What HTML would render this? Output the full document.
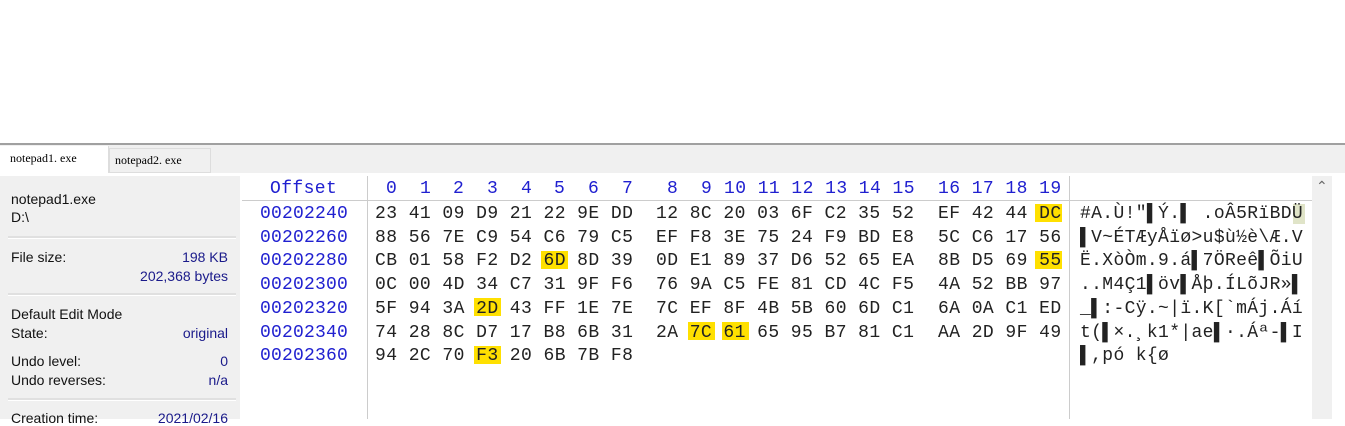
<!DOCTYPE html>
<html><head><meta charset="utf-8"><style>
body{margin:0;width:1345px;height:419px;overflow:hidden;background:#fff;position:relative;font-family:"Liberation Sans",Arial,sans-serif}
div,span{position:absolute}
.m{font-family:"Liberation Mono",monospace;font-size:18px;white-space:pre;color:#222}
.h{color:#2020d0}
.g{letter-spacing:0.43px}
.hl{background:#ffe000;height:18px;width:27px}
.lp{font-size:14px;color:#111}
.r{left:100px;width:128px;text-align:right;color:#1a1a8a}
.sep{left:8px;width:228px;height:2px;background:#e0e0e0;border-bottom:1px solid #fff}
</style></head><body>
<div style="left:0;top:143px;width:1345px;height:2px;background:#a0a0a0"></div>
<div style="left:0;top:145px;width:1345px;height:28px;background:#f0f0f0"></div>
<div style="left:0;top:146px;width:108px;height:27px;background:#fff;border-right:1px solid #ddd"></div>
<div style="left:109px;top:148px;width:100px;height:23px;background:#f0f0f0;border:1px solid #ddd"></div>
<div class="m" style="left:10px;top:151px;font-size:12px;font-family:'Liberation Serif',serif;color:#000">notepad1. exe</div>
<div class="m" style="left:115px;top:153px;font-size:12px;font-family:'Liberation Serif',serif;color:#000">notepad2. exe</div>
<div style="left:0;top:173px;width:1345px;height:3px;background:#fff"></div>
<div style="left:0;top:176px;width:240px;height:243px;background:#f0f0f0"></div>
<div style="left:240px;top:176px;width:2px;height:243px;background:#fff"></div>
<div class="lp" style="left:11px;top:191px">notepad1.exe</div>
<div class="lp" style="left:11px;top:209px">D:\</div>
<div class="sep" style="top:236px"></div>
<div class="lp" style="left:11px;top:249px">File size:</div>
<div class="lp r" style="top:249px">198 KB</div>
<div class="lp r" style="top:268px">202,368 bytes</div>
<div class="sep" style="top:293px"></div>
<div class="lp" style="left:11px;top:306px">Default Edit Mode</div>
<div class="lp" style="left:11px;top:325px">State:</div>
<div class="lp r" style="top:325px">original</div>
<div class="lp" style="left:11px;top:353px">Undo level:</div>
<div class="lp r" style="top:353px">0</div>
<div class="lp" style="left:11px;top:372px">Undo reverses:</div>
<div class="lp r" style="top:372px">n/a</div>
<div class="sep" style="top:398px"></div>
<div class="lp" style="left:11px;top:410px">Creation time:</div>
<div class="lp r" style="top:410px">2021/02/16</div>
<div style="left:242px;top:200px;width:1070px;height:1px;background:#ccc"></div>
<div style="left:367px;top:176px;width:1px;height:243px;background:#ccc"></div>
<div style="left:1069px;top:176px;width:1px;height:243px;background:#ccc"></div>
<div style="left:1312px;top:176px;width:20px;height:243px;background:#f0f0f0"></div>
<div style="left:1316px;top:178px;font-size:14px;color:#666">&#8963;</div>
<div class="m h" style="left:270px;top:179px;letter-spacing:0.4px">Offset</div>
<div class="m h" style="left:386px;top:179px">0</div><div class="m h" style="left:420px;top:179px">1</div><div class="m h" style="left:453px;top:179px">2</div><div class="m h" style="left:487px;top:179px">3</div><div class="m h" style="left:521px;top:179px">4</div><div class="m h" style="left:554px;top:179px">5</div><div class="m h" style="left:588px;top:179px">6</div><div class="m h" style="left:622px;top:179px">7</div><div class="m h" style="left:667px;top:179px">8</div><div class="m h" style="left:701px;top:179px">9</div>
<div class="m h g" style="left:724px;top:179px">10 11 12 13 14 15</div>
<div class="m h g" style="left:938px;top:179px">16 17 18 19</div>
<div class="hl" style="left:1035px;top:204px"></div>
<div class="hl" style="left:541px;top:251px"></div>
<div class="hl" style="left:1035px;top:251px"></div>
<div class="hl" style="left:474px;top:298px"></div>
<div class="hl" style="left:688px;top:322px"></div>
<div class="hl" style="left:722px;top:322px"></div>
<div class="hl" style="left:474px;top:346px"></div>
<div style="left:1293px;top:204px;width:12px;height:20px;background:#e0e4c8"></div>
<div class="m h" style="left:260px;top:203px;line-height:23.7px;letter-spacing:0.2px">00202240
00202260
00202280
00202300
00202320
00202340
00202360</div>
<div class="m g" style="left:375px;top:203px;line-height:23.7px">23 41 09 D9 21 22 9E DD
88 56 7E C9 54 C6 79 C5
CB 01 58 F2 D2 6D 8D 39
0C 00 4D 34 C7 31 9F F6
5F 94 3A 2D 43 FF 1E 7E
74 28 8C D7 17 B8 6B 31
94 2C 70 F3 20 6B 7B F8</div>
<div class="m g" style="left:656px;top:203px;line-height:23.7px">12 8C 20 03 6F C2 35 52
EF F8 3E 75 24 F9 BD E8
0D E1 89 37 D6 52 65 EA
76 9A C5 FE 81 CD 4C F5
7C EF 8F 4B 5B 60 6D C1
2A 7C 61 65 95 B7 81 C1</div>
<div class="m g" style="left:938px;top:203px;line-height:23.7px">EF 42 44 DC
5C C6 17 56
8B D5 69 55
4A 52 BB 97
6A 0A C1 ED
AA 2D 9F 49</div>
<div class="m" style="left:1080px;top:203px;line-height:23.7px;letter-spacing:0.35px">#A.Ù!"▌Ý.▌ .oÂ5RïBDÜ
▌V~ÉTÆyÅïø&gt;u$ù½è\Æ.V
Ë.XòÒm.9.á▌7ÖReê▌ÕiU
..M4Ç1▌öv▌Åþ.ÍLõJR»▌
_▌:-Cÿ.~|ï.K[`mÁj.Áí
t(▌×.¸k1*|ae▌·.Áª-▌I
▌,pó k{ø</div>
</body></html>
